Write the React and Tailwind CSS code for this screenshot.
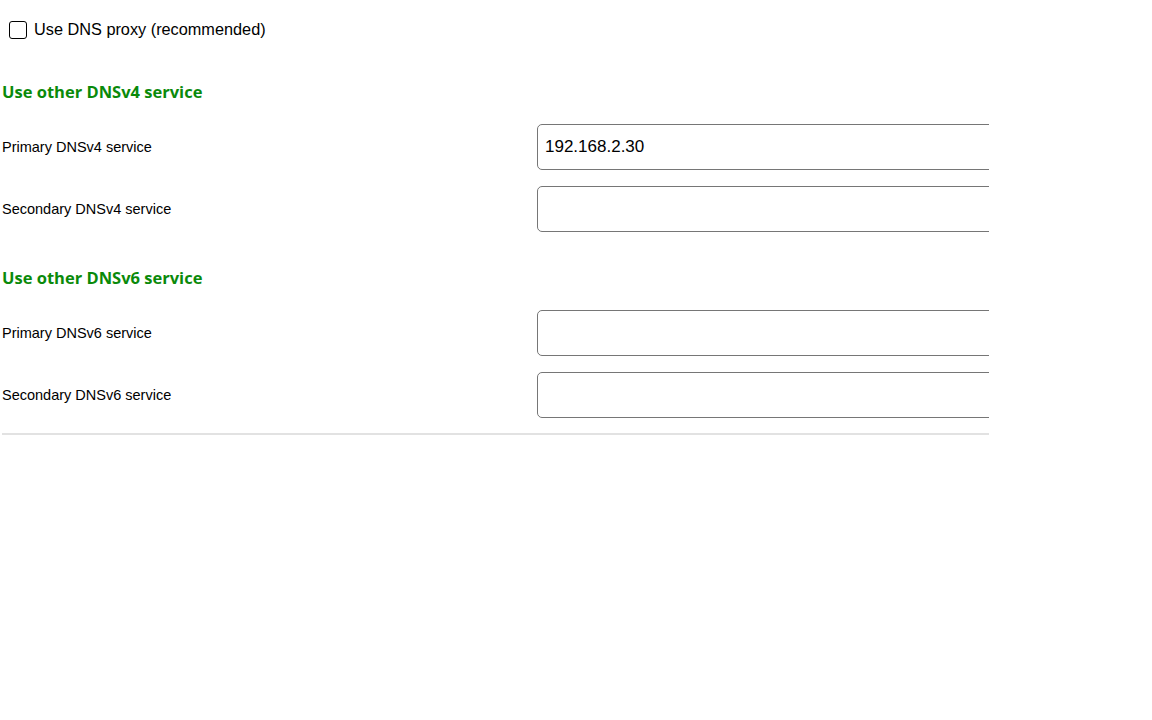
import React from "react";

function Row({ label, value }) {
  return (
    <div className="flex items-center h-[46px] mb-[16px]">
      <div className="w-[535px] shrink-0 pt-[2px] text-[14.5px] text-black font-['Liberation_Sans',Arial,sans-serif]">
        {label}
      </div>
      <div className="flex-1 min-w-0">
        <input
          readOnly
          value={value}
          className="w-[560px] h-[46px] border border-[#767676] rounded-[5px] px-[7px] text-[17px] text-black font-['Liberation_Sans',Arial,sans-serif] outline-none bg-white"
        />
      </div>
    </div>
  );
}

function Heading({ children }) {
  return (
    <h3 className="text-[16.5px] leading-[20px] font-bold text-[#0a8a0a] font-['Open_Sans',sans-serif] mb-[22px]">
      {children}
    </h3>
  );
}

export default function App() {
  return (
    <div className="w-[1152px] h-[720px] bg-white">
      <div className="pl-[2px] w-[989px] overflow-hidden">
        <label className="flex items-center h-[20px] mt-[20px] pl-[7px] gap-[7px] font-['Liberation_Sans',Arial,sans-serif] text-[16.3px] text-black">
          <span className="w-[18px] h-[18px] border border-black rounded-[3px] bg-white inline-block"></span>
          <span className="-mt-[2px]">Use DNS proxy (recommended)</span>
        </label>
        <div className="mt-[42px]">
          <Heading>Use other DNSv4 service</Heading>
          <Row label="Primary DNSv4 service" value="192.168.2.30" />
          <Row label="Secondary DNSv4 service" value="" />
        </div>
        <div className="mt-[36px]">
          <Heading>Use other DNSv6 service</Heading>
          <Row label="Primary DNSv6 service" value="" />
          <Row label="Secondary DNSv6 service" value="" />
        </div>
        <div className="h-[2px] bg-[#e2e2e2] -mt-[1px]"></div>
      </div>
    </div>
  );
}
